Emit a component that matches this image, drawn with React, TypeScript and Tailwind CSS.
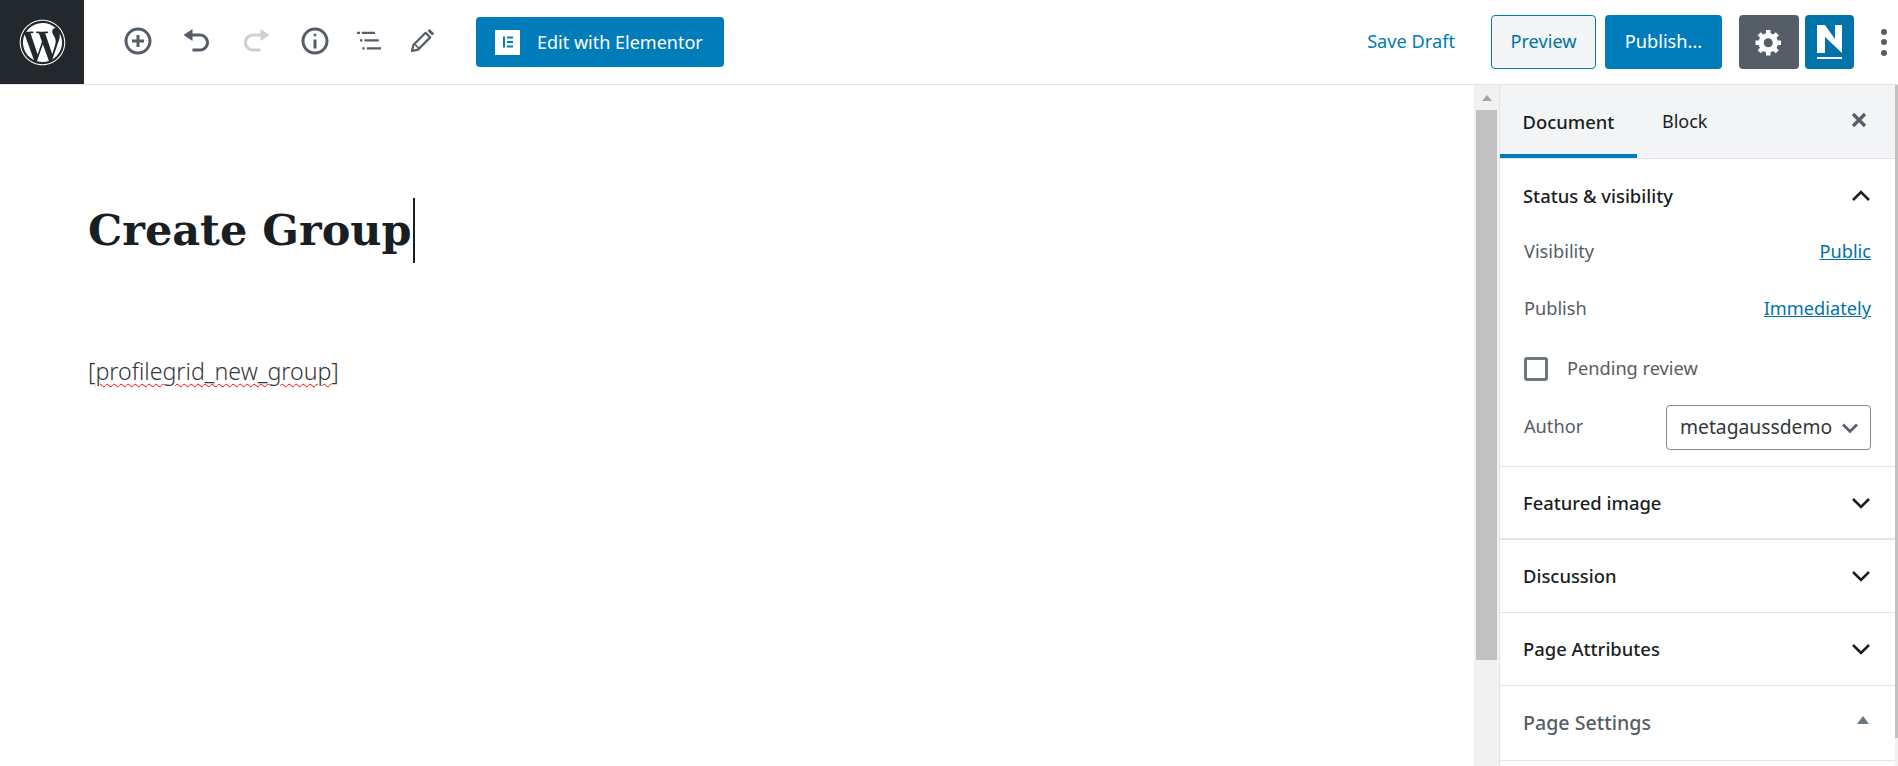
import React from 'react';
import { FaWordpress } from 'react-icons/fa';

const sansFont = { fontFamily: '"Noto Sans", "Open Sans", sans-serif' };

const ChevronDown: React.FC = () => (
    <svg width="20" height="12" viewBox="0 0 20 12" fill="none" stroke="#191e23" strokeWidth="2.6">
        <path d="M2 2l8 8 8-8" />
    </svg>
);

const ChevronUp: React.FC = () => (
    <svg width="20" height="12" viewBox="0 0 20 12" fill="none" stroke="#191e23" strokeWidth="2.6">
        <path d="M2 10l8-8 8 8" />
    </svg>
);

const ToolIcon: React.FC<{ d: string; color?: string }> = ({ d, color = '#555d66' }) => (
    <svg width="30" height="30" viewBox="0 0 20 20" fill={color}>
        <path d={d} />
    </svg>
);

const PanelRow: React.FC<{ title: string; heavyBorder?: boolean }> = ({ title, heavyBorder }) => (
    <div className={`flex items-center justify-between h-[73px] pl-[23px] pr-[24px] border-[#e2e4e7] ${heavyBorder ? 'border-b-2' : 'border-b'}`}>
        <span className="text-[18.4px] font-medium text-[#191e23]">{title}</span>
        <ChevronDown />
    </div>
);

const App: React.FC = () => {
    return (
        <div className="h-[766px] w-[1898px] overflow-hidden bg-white flex flex-col" style={sansFont}>
            {/* top bar */}
            <header className="h-[85px] shrink-0 flex items-center border-b border-[#e2e4e7]">
                <div className="w-[84px] h-[84px] bg-[#23282d] flex items-center justify-center text-white">
                    <FaWordpress size={47} />
                </div>
                <div className="flex items-center ml-[39px] -mt-[2px]">
                    <ToolIcon d="M10 1c-5 0-9 4-9 9s4 9 9 9 9-4 9-9-4-9-9-9zm0 16c-3.9 0-7-3.1-7-7s3.1-7 7-7 7 3.1 7 7-3.1 7-7 7zm1-11H9v3H6v2h3v3h2v-3h3V9h-3V6z" />
                    <div className="ml-[29px]">
                        <ToolIcon d="M12 5H7V2L1 6l6 4V7h5c2.2 0 4 1.8 4 4s-1.8 4-4 4H7v2h5c3.3 0 6-2.7 6-6s-2.7-6-6-6z" />
                    </div>
                    <div className="ml-[29px]">
                        <ToolIcon color="#ccd0d4" d="M8 5h5V2l6 4-6 4V7H8c-2.2 0-4 1.8-4 4s1.8 4 4 4h5v2H8c-3.3 0-6-2.7-6-6s2.7-6 6-6z" />
                    </div>
                    <div className="ml-[29px]">
                        <ToolIcon d="M9 15h2V9H9v6zm1-10c-.5 0-1 .5-1 1s.5 1 1 1 1-.5 1-1-.5-1-1-1zm0-4c-5 0-9 4-9 9s4 9 9 9 9-4 9-9-4-9-9-9zm0 16c-3.9 0-7-3.1-7-7s3.1-7 7-7 7 3.1 7 7-3.1 7-7 7z" />
                    </div>
                    <div className="ml-[24px]">
                        <ToolIcon d="M2 3.9h2v1.4H2zM5.2 3.9H14v1.4H5.2zM4 8.9h1.6v1.4H4zM7 8.9h9.5v1.4H7zM5.5 14.2h1.6v1.4H5.5zM8.5 14.2H18v1.4H8.5z" />
                    </div>
                    <div className="ml-[23px]">
                        <svg width="30" height="30" viewBox="0 0 30 30">
                            <path d="M5 25l1.4-6L18.6 6.8l4.6 4.6L11 23.6z" fill="none" stroke="#555d66" strokeWidth="2.2" strokeLinejoin="round" />
                            <path d="M8 18.5l3.5 3.5" fill="none" stroke="#555d66" strokeWidth="1.6" />
                            <path d="M20.6 5l2-2 4.6 4.6-2 2z" fill="#555d66" />
                        </svg>
                    </div>
                </div>
                <button className="ml-[39px] w-[248px] h-[50px] rounded-[4px] bg-[#007cba] text-white text-[18px] flex items-center pl-[19px]">
                    <span className="w-[25px] h-[25px] bg-white flex items-center justify-center">
                        <svg width="12" height="12" viewBox="0 0 12 12" fill="#007cba">
                            <rect x="1" y="0.5" width="2" height="11" />
                            <rect x="5" y="0.5" width="6" height="2" />
                            <rect x="5" y="5" width="6" height="2" />
                            <rect x="5" y="9.5" width="6" height="2" />
                        </svg>
                    </span>
                    <span className="ml-[17px]">Edit with Elementor</span>
                </button>
                <div className="ml-auto flex items-center">
                    <span className="text-[18.2px] text-[#007cba] mr-[36px]">Save Draft</span>
                    <button className="w-[105px] h-[54px] rounded-[4px] border border-[#007cba] bg-[#f3f5f6] text-[#0071a1] text-[18.2px]">Preview</button>
                    <button className="ml-[9px] w-[117px] h-[54px] rounded-[4px] bg-[#007cba] text-white text-[18.2px]">Publish...</button>
                    <button className="ml-[17px] w-[60px] h-[54px] rounded-[4px] bg-[#555d66] flex items-center justify-center">
                        <svg width="30" height="30" viewBox="0 0 20 20" fill="#fff">
                            <path d="M18 12h-2.18c-.17.7-.44 1.35-.81 1.93l1.54 1.54-2.1 2.1-1.54-1.54c-.58.36-1.23.63-1.91.79V19H8v-2.18c-.68-.16-1.33-.43-1.91-.79l-1.54 1.54-2.12-2.12 1.54-1.54c-.36-.58-.63-1.23-.79-1.91H1V9.03h2.17c.16-.7.44-1.35.8-1.94L2.43 5.55l2.1-2.1 1.54 1.54c.58-.37 1.24-.64 1.93-.81V2h3v2.18c.68.16 1.33.43 1.91.79l1.54-1.54 2.12 2.12-1.54 1.54c.36.59.64 1.24.8 1.94H18V12zm-8.5 1.5c1.66 0 3-1.34 3-3s-1.34-3-3-3-3 1.34-3 3 1.34 3 3 3z" />
                        </svg>
                    </button>
                    <button className="ml-[6px] w-[49px] h-[54px] rounded-[4px] bg-[#0073aa] flex items-center justify-center">
                        <svg width="25" height="34" viewBox="0 0 25 34" fill="#fff">
                            <path d="M0 0h8l10 14V0h7v28L8 12v16H0z" />
                            <rect x="0" y="32" width="25" height="2" />
                        </svg>
                    </button>
                    <div className="w-[44px] flex flex-col items-center gap-[4.5px] pl-[16px]">
                        <span className="w-[6px] h-[6px] rounded-full bg-[#555d66]" />
                        <span className="w-[6px] h-[6px] rounded-full bg-[#555d66]" />
                        <span className="w-[6px] h-[6px] rounded-full bg-[#555d66]" />
                    </div>
                </div>
            </header>

            <div className="flex-1 flex min-h-0">
                {/* editor canvas */}
                <main className="flex-1 pl-[88px] pt-[113px]">
                    <div className="flex items-start">
                        <h1 className="text-[43px] leading-[65px] font-bold text-[#191e23] mr-px" style={{ fontFamily: '"DejaVu Serif", serif' }}>Create Group</h1>
                        <span className="w-[2px] h-[65px] bg-[#191e23]" />
                    </div>
                    <p className="mt-[93px] text-[23.2px] font-light text-[#32373c] leading-[30px]">
                        [<span className="underline decoration-wavy decoration-[#f00] decoration-1 underline-offset-[3px]">profilegrid_new_group</span>]
                    </p>
                </main>

                {/* page scrollbar */}
                <div className="w-[25px] shrink-0 bg-[#f1f1f1] flex flex-col items-center">
                    <div className="h-[25px] flex items-center">
                        <span className="w-0 h-0 border-x-[5px] border-x-transparent border-b-[6px] border-b-[#a3a3a3]" />
                    </div>
                    <div className="w-[21px] h-[550px] bg-[#c1c1c1]" />
                </div>

                {/* sidebar */}
                <aside className="w-[399px] shrink-0 flex border-l border-[#e2e4e7]">
                    <div className="flex-1 min-w-0">
                        <div className="h-[74px] bg-[#f3f4f5] border-b border-[#e2e4e7] flex items-start">
                            <div className="w-[137px] h-[73px] border-b-4 border-[#007cba] flex items-center justify-center pt-[5px] text-[18.4px] font-medium text-[#191e23]">Document</div>
                            <div className="h-[73px] ml-[25px] flex items-center text-[18px] text-[#191e23]">Block</div>
                            <div className="ml-auto mr-[27px] h-[70px] flex items-center">
                                <svg width="18" height="18" viewBox="0 0 18 18" stroke="#555d66" strokeWidth="3.2">
                                    <path d="M3 3l12 12M15 3L3 15" />
                                </svg>
                            </div>
                        </div>

                        <div className="border-b border-[#e2e4e7] pl-[24px] pr-[24px] pb-[16px]">
                            <div className="h-[74px] flex items-center justify-between">
                                <span className="text-[18.4px] font-medium text-[#191e23] -ml-px">Status &amp; visibility</span>
                                <ChevronUp />
                            </div>
                            <div className="h-10 -mt-px flex items-center justify-between text-[18.2px]">
                                <span className="text-[#555d66]">Visibility</span>
                                <a className="text-[#0073aa] underline">Public</a>
                            </div>
                            <div className="h-10 mt-[17px] flex items-center justify-between text-[18.2px]">
                                <span className="text-[#555d66]">Publish</span>
                                <a className="text-[#0073aa] underline">Immediately</a>
                            </div>
                            <div className="h-10 mt-[20px] flex items-center text-[18.2px] text-[#555d66]">
                                <span className="w-[24px] h-[24px] rounded-[3px] border-[3px] border-[#6c7781]" />
                                <span className="ml-[19px]">Pending review</span>
                            </div>
                            <div className="h-[45px] mt-[16px] flex items-center justify-between text-[18.2px]">
                                <span className="text-[#555d66] -mt-[2px]">Author</span>
                                <div className="w-[205px] h-[45px] rounded-[4px] border border-[#7e8993] flex items-center justify-between pl-[13px] pr-[12px] text-[#32373c] text-[19.3px]">
                                    <span>metagaussdemo</span>
                                    <svg width="16" height="10" viewBox="0 0 16 10" fill="none" stroke="#555d66" strokeWidth="2.6"><path d="M1 1.5l7 7 7-7" /></svg>
                                </div>
                            </div>
                        </div>

                        <PanelRow title="Featured image" heavyBorder />
                        <PanelRow title="Discussion" />
                        <PanelRow title="Page Attributes" />
                        <div className="flex justify-between h-[75px] pl-[23px] pr-[26px] border-b border-[#e2e4e7]">
                            <span className="text-[19.6px] font-medium text-[#555d66] leading-[73px]">Page Settings</span>
                            <span className="mt-[30px] w-0 h-0 border-x-[6px] border-x-transparent border-b-[8px] border-b-[#6c7781]" />
                        </div>
                    </div>
                    {/* thin sidebar scrollbar */}
                    <div className="w-[3px] shrink-0 flex flex-col">
                        <div className="h-[653px] bg-[#c1c1c1]" />
                        <div className="flex-1 bg-[#f1f1f1]" />
                    </div>
                </aside>
            </div>
        </div>
    );
};

export default App;
